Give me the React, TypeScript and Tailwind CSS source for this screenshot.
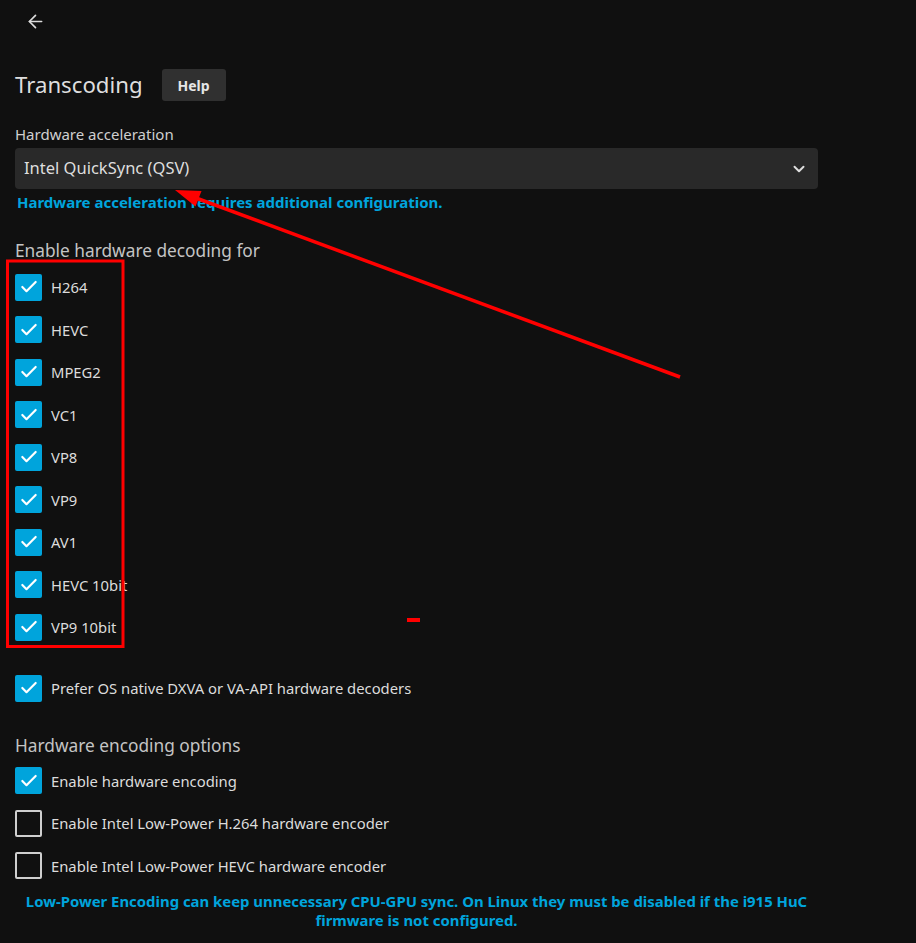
import { ArrowLeft, ChevronDown, Check } from "lucide-react";

const decoders = ["H264", "HEVC", "MPEG2", "VC1", "VP8", "VP9", "AV1", "HEVC 10bit", "VP9 10bit"];

function CheckRow({ label, checked = true }: { label: string; checked?: boolean }) {
  return (
    <label className="flex h-[42.5px] items-center">
      <span
        className={`flex h-[27px] w-[27px] shrink-0 items-center justify-center rounded-[2px] ${
          checked ? "bg-[#00a4dc]" : "border-2 border-[#cfcfcf]"
        }`}
      >
        {checked && <Check className="h-[20px] w-[20px] text-white" strokeWidth={2.6} />}
      </span>
      <span className="ml-[9px] text-[14.8px] text-[#dcdcdc]">{label}</span>
    </label>
  );
}

export default function App() {
  return (
    <main
      className="relative min-h-[943px] w-full bg-[#101010] text-[#dddddd]"
      style={{ fontFamily: '"Noto Sans", "Open Sans", sans-serif' }}
    >
      {/* top bar */}
      <div className="flex h-[42px] items-center pl-[25px]">
        <ArrowLeft className="h-[21px] w-[21px] text-[#dcdcdc]" strokeWidth={1.9} />
      </div>

      <div className="w-[818px] pl-[15px]">
        <div className="mt-[27px] flex h-[32px] items-center">
          <h2 className="text-[22.2px] leading-[32px] text-[#dedede]">Transcoding</h2>
          <button className="ml-[19px] h-[32px] w-[64px] rounded-[3px] bg-[#303030] text-[14px] font-bold text-[#e6e6e6]">
            Help
          </button>
        </div>

        <div className="mt-[23px] text-[15px] leading-[20px] text-[#cfcfcf]">Hardware acceleration</div>
        <div className="mt-[4px] flex h-[41px] items-center justify-between rounded-[4px] bg-[#292929] pl-[9px] pr-[10px]">
          <span className="text-[16.5px] text-[#dedede]">Intel QuickSync (QSV)</span>
          <ChevronDown className="h-[18px] w-[18px] text-[#dedede]" strokeWidth={2.6} />
        </div>
        <div className="mt-[4px] pl-[2px] text-[15px] font-bold leading-[18px] text-[#00a4dc]">
          Hardware acceleration requires additional configuration.
        </div>

        <h3 className="mt-[28px] text-[17.3px] leading-[24px] text-[#c4c4c4]">Enable hardware decoding for</h3>
        <div className="mt-[3px] flex flex-col">
          {decoders.map((d) => (
            <CheckRow key={d} label={d} />
          ))}
        </div>

        <div className="mt-[18.5px]">
          <CheckRow label="Prefer OS native DXVA or VA-API hardware decoders" />
        </div>

        <h3 className="mt-[24px] text-[17.3px] leading-[24px] text-[#c4c4c4]">Hardware encoding options</h3>
        <div className="mt-[2px] flex flex-col">
          <CheckRow label="Enable hardware encoding" />
          <CheckRow label="Enable Intel Low-Power H.264 hardware encoder" checked={false} />
          <CheckRow label="Enable Intel Low-Power HEVC hardware encoder" checked={false} />
        </div>

        <p className="mt-[5px] text-center text-[14.9px] font-bold leading-[19px] text-[#00a4dc]">
          Low-Power Encoding can keep unnecessary CPU-GPU sync. On Linux they must be disabled if the i915 HuC firmware is
          not configured.
        </p>
      </div>

      {/* annotation overlay */}
      <svg className="pointer-events-none absolute left-0 top-0" width="916" height="943" viewBox="0 0 916 943">
        <rect x="7.5" y="261" width="115.5" height="385.5" fill="none" stroke="#ff0000" strokeWidth="3" />
        <line x1="680" y1="377" x2="196" y2="198" stroke="#ff0000" strokeWidth="3.5" />
        <polygon points="175,190 201.5,191 195.5,206.5" fill="#ff0000" />
        <rect x="407" y="618" width="13" height="4" fill="#ff0000" />
      </svg>
    </main>
  );
}
